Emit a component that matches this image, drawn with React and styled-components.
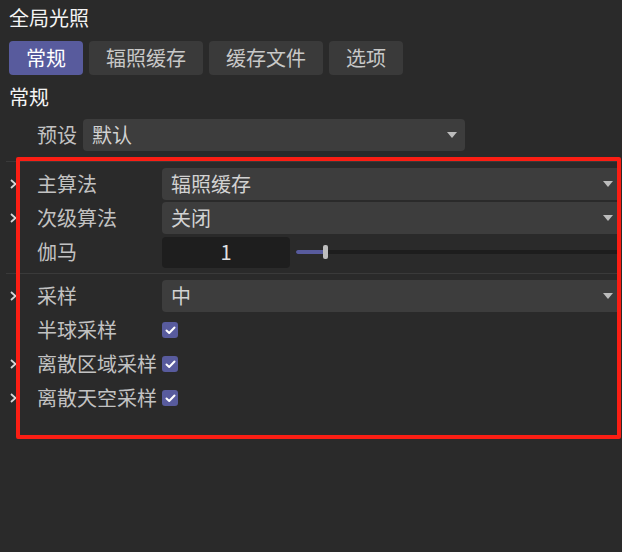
import React from "react";
import styled, { createGlobalStyle } from "styled-components";

const Global = createGlobalStyle`
  html, body {
    margin: 0;
    background: #2a2a2a;
  }
  body {
    font-family: "Noto Sans CJK SC", "Noto Sans", sans-serif;
    font-size: 20px;
    line-height: 1;
    color: #c6c6c6;
  }
`;

const Panel = styled.div`
  position: relative;
  width: 622px;
  height: 552px;
  box-sizing: border-box;
  padding: 0 1px 0 9px;
  overflow: hidden;
`;

const Title = styled.div`
  height: 36px;
  display: flex;
  align-items: center;
  color: #f4f4f4;
`;

const Tabs = styled.div`
  margin-top: 5px;
  display: flex;
  gap: 6px;
  height: 34px;
`;

const Tab = styled.div`
  display: flex;
  align-items: center;
  padding: 0 17px;
  border-radius: 4px;
  background: ${(p) => (p.$active ? "#585b9d" : "#3a3a3a")};
  color: ${(p) => (p.$active ? "#ffffff" : "#c8c8c8")};
`;

const Heading = styled.div`
  height: 44px;
  display: flex;
  align-items: center;
  color: #f4f4f4;
`;

const PresetRow = styled.div`
  height: 32px;
  display: flex;
  align-items: center;
  gap: 6px;
  padding-left: 28px;
`;

const Divider = styled.div`
  height: 1px;
  background: #3a3a3a;
  margin: ${(p) => p.$margin};
`;

const Row = styled.div`
  display: grid;
  grid-template-columns: 28px 125px 1fr;
  align-items: center;
  height: 34px;
`;

const Chevron = styled.span`
  display: flex;
  align-items: center;
  padding-left: 1px;
`;

const Label = styled.span`
  color: #c2c2c2;
  white-space: nowrap;
`;

const Select = styled.div`
  height: 32px;
  width: ${(p) => p.$width || "auto"};
  box-sizing: border-box;
  display: flex;
  align-items: center;
  justify-content: space-between;
  padding: 0 8px 0 9px;
  border-radius: 4px;
  background: #3d3d3d;
  color: #d2d2d2;
`;

const Arrow = () => (
  <svg width="10" height="6" viewBox="0 0 10 6">
    <polygon points="0,0 10,0 5,6" fill="#bcbcbc" />
  </svg>
);

const ChevronIcon = () => (
  <svg width="7" height="10" viewBox="0 0 7 10">
    <polyline
      points="1,1 5.5,5 1,9"
      fill="none"
      stroke="#d6d6d6"
      strokeWidth="1.8"
    />
  </svg>
);

const SliderField = styled.div`
  display: flex;
  align-items: center;
  gap: 6px;
`;

const NumberBox = styled.div`
  width: 128px;
  height: 31px;
  flex: none;
  display: flex;
  align-items: center;
  justify-content: center;
  border-radius: 4px;
  background: #1e1e1e;
  color: #e2e2e2;
`;

const Track = styled.div`
  position: relative;
  flex: 1;
  height: 4px;
  background: #1d1d1d;
`;

const Fill = styled.div`
  height: 100%;
  background: #585b9d;
  border-radius: 2px 0 0 2px;
`;

const Thumb = styled.div`
  position: absolute;
  top: -5px;
  width: 5px;
  height: 14px;
  margin-left: -2px;
  border-radius: 2px;
  background: #bdbdbd;
`;

const Check = styled.span`
  width: 16px;
  height: 16px;
  border-radius: 3px;
  background: #585b9d;
  display: flex;
  align-items: center;
  justify-content: center;
`;

const CheckMark = () => (
  <svg width="11" height="9" viewBox="0 0 11 9">
    <polyline
      points="1.5,4.5 4.2,7 9.5,1.5"
      fill="none"
      stroke="#ffffff"
      strokeWidth="2"
      strokeLinecap="round"
      strokeLinejoin="round"
    />
  </svg>
);

const Highlight = styled.div`
  position: absolute;
  left: 16px;
  top: 157px;
  width: 605px;
  height: 282px;
  box-sizing: border-box;
  border: 4px solid #fb1e14;
  border-radius: 2px;
  pointer-events: none;
`;

const tabs = ["常规", "辐照缓存", "缓存文件", "选项"];

const SelectRow = ({ label, value, chevron }) => (
  <Row>
    <Chevron>{chevron && <ChevronIcon />}</Chevron>
    <Label>{label}</Label>
    <Select>
      <span>{value}</span>
      <Arrow />
    </Select>
  </Row>
);

const CheckRow = ({ label, chevron }) => (
  <Row>
    <Chevron>{chevron && <ChevronIcon />}</Chevron>
    <Label>{label}</Label>
    <div>
      <Check>
        <CheckMark />
      </Check>
    </div>
  </Row>
);

export default function App() {
  const gamma = 1;
  const fillPct = 9;
  return (
    <>
      <Global />
      <Panel>
        <Title>全局光照</Title>
        <Tabs>
          {tabs.map((t, i) => (
            <Tab key={t} $active={i === 0}>
              {t}
            </Tab>
          ))}
        </Tabs>
        <Heading>常规</Heading>
        <PresetRow>
          <Label>预设</Label>
          <Select $width="382px">
            <span>默认</span>
            <Arrow />
          </Select>
        </PresetRow>
        <Divider $margin="10px 0 5px -3px" />
        <SelectRow label="主算法" value="辐照缓存" chevron />
        <SelectRow label="次级算法" value="关闭" chevron />
        <Row>
          <Chevron />
          <Label>伽马</Label>
          <SliderField>
            <NumberBox>{gamma}</NumberBox>
            <Track>
              <Fill style={{ width: `${fillPct}%` }} />
              <Thumb style={{ left: `${fillPct}%` }} />
            </Track>
          </SliderField>
        </Row>
        <Divider $margin="4px 0 5px -3px" />
        <SelectRow label="采样" value="中" chevron />
        <CheckRow label="半球采样" />
        <CheckRow label="离散区域采样" chevron />
        <CheckRow label="离散天空采样" chevron />
        <Highlight />
      </Panel>
    </>
  );
}
